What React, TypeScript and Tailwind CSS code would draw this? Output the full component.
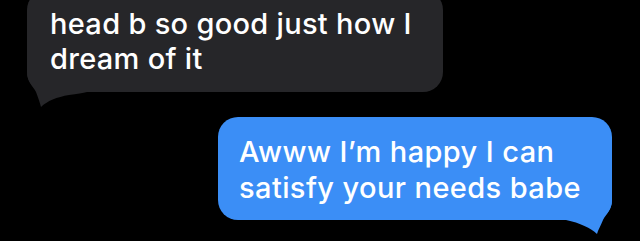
export default function App() {
  return (
    <div className="w-[640px] h-[241px] bg-black overflow-hidden" style={{ fontFamily: '"Inter", "Liberation Sans", sans-serif' }}>
      <div className="flex flex-col pl-[27px] pr-[28px]">
        <div className="relative mt-[-10px] self-start w-[416px] rounded-[20px] bg-[#262629] pl-[23px] pt-[16px] pb-[16px] text-white text-[29px] font-medium leading-[35px] tracking-[0.3px] whitespace-nowrap">
          <svg className="absolute left-0 -bottom-[20px] w-[64px] h-[50px] overflow-visible" viewBox="0 -30 64 50">
            <path d="M0,-30 L0,-20 C0,-10 6,-6 9,0 C11,5 13,11 14,15 C20,9 30,5 42,3 C50,2 56,1 60,0 L60,-30 Z" fill="#262629" />
          </svg>
          <p className="relative">head b so good just how I<br />dream of it</p>
        </div>
        <div className="relative mt-[25px] self-end w-[394px] rounded-[20px] bg-[#3b8ef6] pl-[21px] pt-[17px] pb-[14px] text-white text-[29px] font-medium leading-[36px] tracking-[0.4px] whitespace-nowrap">
          <svg className="absolute right-0 -bottom-[20px] w-[64px] h-[50px] overflow-visible" viewBox="-64 -30 64 50">
            <path d="M0,-30 L0,-20 C0,-10 -6,-6 -9,0 C-11,5 -14,10 -15,14 C-21,8 -32,3 -46,0 L-46,-30 Z" fill="#3b8ef6" />
          </svg>
          <p className="relative">Awww I’m happy I can<br />satisfy your needs babe</p>
        </div>
      </div>
    </div>
  );
}
